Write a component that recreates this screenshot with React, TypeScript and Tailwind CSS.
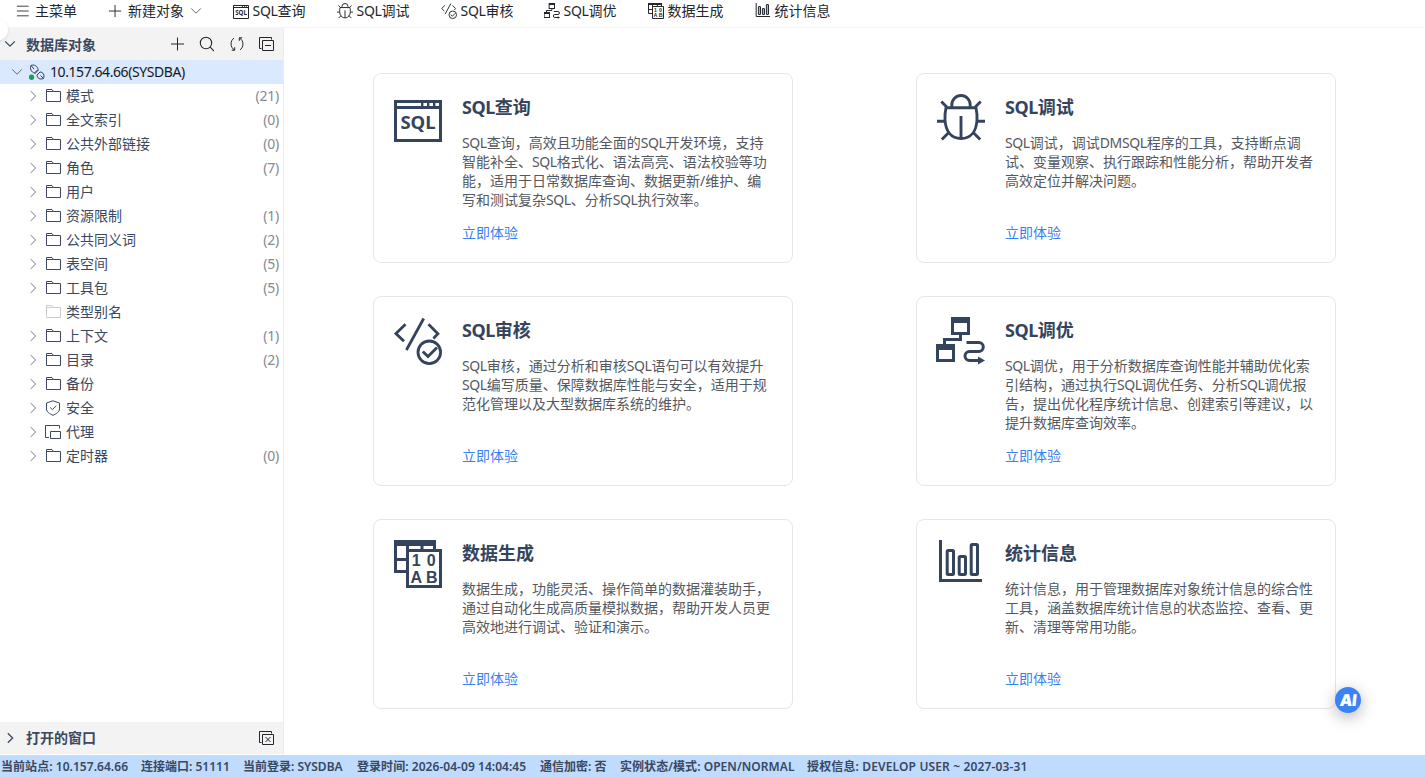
import type { ReactNode } from "react";

type IconProps = { className?: string };

function SqlIcon({ className = "size-12" }: IconProps) {
  return (
    <svg viewBox="0 0 48 48" className={className} fill="none" stroke="currentColor" strokeWidth="3">
      <path d="M1.5 7.5h45v39h-45zM1.5 13.5h45" />
      <path d="M28.2 8v5M34.2 8v5M40.2 8v5" strokeWidth="2.4" />
      <text x="6.5" y="35" textLength="35" fontSize="18.5" fontWeight="700" fill="currentColor" stroke="none">
        SQL
      </text>
    </svg>
  );
}

function BugIcon({ className = "size-12" }: IconProps) {
  return (
    <svg viewBox="0 0 48 48" className={className} fill="none" stroke="currentColor" strokeWidth="2.9">
      <path d="M14.8 13.5V11a9.2 9.5 0 0 1 18.4 0v2.5" />
      <path d="M9 13.7h30c.8 3.5 1.2 8 1 12.5C39.3 37 34 44.5 24 44.5S8.7 37 8 26.2c-.2-4.5.2-9 1-12.5z" />
      <path d="M24 22v22" />
      <path d="M4.3 7.5l5.5 5.5M43.7 7.5L38.2 13M0 27.3h7.5M40.5 27.3H48M4.8 45.5l7.5-7.5M43.2 45.5l-7.5-7.5" />
    </svg>
  );
}

function AuditIcon({ className = "size-12" }: IconProps) {
  return (
    <svg viewBox="0 0 48 48" className={className} fill="none" stroke="currentColor" strokeWidth="2.8">
      <path d="M11.5 7.2L2 16.6l8 7.6M29.7 1.5L12.4 33M34.5 7.2l9.4 9.6-4.5 4.6" />
      <circle cx="35.3" cy="35.3" r="11.3" />
      <path d="M28.8 34.6l5.2 5 9-9.2" />
    </svg>
  );
}

function TuneIcon({ className = "size-12" }: IconProps) {
  return (
    <svg viewBox="0 0 48 48" className={className} fill="none" stroke="currentColor" strokeWidth="3">
      <path d="M14 0h19v18H14zM17 6v9h13V6z" fill="currentColor" fillRule="evenodd" stroke="none" />
      <path d="M-1 27h19v18H-1zM2 33v9h13v-9z" fill="currentColor" fillRule="evenodd" stroke="none" />
      <path d="M23.5 18v4.5h-16V27" />
      <path d="M29.5 25.5h12.3a4.5 4.5 0 0 1 0 9H32.5a4.5 4.5 0 0 0 0 9H42" />
      <path d="M41 39.5l7 4-7 4z" fill="currentColor" stroke="none" />
    </svg>
  );
}

function GenerateIcon({ className = "size-12" }: IconProps) {
  return (
    <svg viewBox="0 0 48 48" className={className} fill="none" stroke="currentColor" strokeWidth="3">
      <path d="M0 0h42v6H0z" fill="currentColor" stroke="none" />
      <path d="M1.5 3v28.5H12M1.5 19.5H12M13.5 6v5M28 6v4M40.5 6v4" />
      <path d="M13.5 10.5h33v36h-33z" />
      <g
        fill="currentColor"
        stroke="none"
        fontSize="16"
        fontWeight="700"
        textAnchor="middle"
        fontFamily="Liberation Sans, sans-serif"
      >
        <text x="22.3" y="26.3">1</text>
        <text x="37.3" y="26.3">0</text>
        <text x="22.3" y="43">A</text>
        <text x="37.7" y="43">B</text>
      </g>
    </svg>
  );
}

function StatsIcon({ className = "size-12", fill = "none" }: IconProps & { fill?: string }) {
  return (
    <svg viewBox="0 0 48 48" className={className} fill="none" stroke="currentColor" strokeWidth="3">
      <path d="M3.5 0v40.5H45" />
      <g fill={fill}>
        <rect x="10.2" y="10.5" width="6.3" height="24" rx="1" />
        <rect x="22.2" y="16.5" width="6.3" height="18" rx="1" />
        <rect x="34.2" y="4.5" width="6.3" height="30" rx="1" />
      </g>
    </svg>
  );
}

function Line({ d, className }: { d: string; className: string }) {
  return (
    <svg viewBox="0 0 16 16" className={className} fill="none" stroke="currentColor">
      <path d={d} />
    </svg>
  );
}

const CHEVRON_DOWN = "M2.5 5l5.5 5.5L13.5 5";
const CHEVRON_RIGHT = "M5.5 2.5L11 8l-5.5 5.5";
const PLUS = "M7.5 1v13M1 7.5h13";
const FOLDER = "M1.5 13.5v-12H7l1.5 2h7v10zM1.5 3.5h7";
const SHIELD = "M8 .8L14.5 3v6c0 3-3.500 5-6.500 6.300C5 14 1.500 12 1.500 9V3zM5.200 7.500l2.200 2.200 3.800-4";
const AGENT = "M4 13.5H.5v-12h14v3M5.5 7.5h10v7h-10z";

// Latin runs are set slightly tighter than the Chinese text around them
function Mixed({ text, tight }: { text: string; tight: string }) {
  return (
    <>
      {text.split(/([A-Z]+)/).map((part, i) =>
        /^[A-Z]+$/.test(part) ? <span key={i} className={tight}>{part}</span> : part
      )}
    </>
  );
}

const tools: { label: string; width: string; icon: ReactNode }[] = [
  { label: "SQL查询", width: "w-[104px]", icon: <SqlIcon className="size-4" /> },
  { label: "SQL调试", width: "w-[104px]", icon: <BugIcon className="size-4" /> },
  { label: "SQL审核", width: "w-[103px]", icon: <AuditIcon className="size-4" /> },
  { label: "SQL调优", width: "w-[104px]", icon: <TuneIcon className="size-4" /> },
  { label: "数据生成", width: "w-[107px]", icon: <GenerateIcon className="size-4" /> },
  { label: "统计信息", width: "w-[80px]", icon: <StatsIcon className="size-4" fill="#8ebcf0" /> },
];

const nodes: { name: string; count?: number; icon?: string; empty?: boolean }[] = [
  { name: "模式", count: 21 },
  { name: "全文索引", count: 0 },
  { name: "公共外部链接", count: 0 },
  { name: "角色", count: 7 },
  { name: "用户" },
  { name: "资源限制", count: 1 },
  { name: "公共同义词", count: 2 },
  { name: "表空间", count: 5 },
  { name: "工具包", count: 5 },
  { name: "类型别名", empty: true },
  { name: "上下文", count: 1 },
  { name: "目录", count: 2 },
  { name: "备份" },
  { name: "安全", icon: SHIELD },
  { name: "代理", icon: AGENT },
  { name: "定时器", count: 0 },
];

const cards: { title: string; icon: ReactNode; lines: string[] }[] = [
  {
    title: "SQL查询",
    icon: <SqlIcon />,
    lines: [
      "SQL查询，高效且功能全面的SQL开发环境，支持",
      "智能补全、SQL格式化、语法高亮、语法校验等功",
      "能，适用于日常数据库查询、数据更新/维护、编",
      "写和测试复杂SQL、分析SQL执行效率。",
    ],
  },
  {
    title: "SQL调试",
    icon: <BugIcon />,
    lines: [
      "SQL调试，调试DMSQL程序的工具，支持断点调",
      "试、变量观察、执行跟踪和性能分析，帮助开发者",
      "高效定位并解决问题。",
    ],
  },
  {
    title: "SQL审核",
    icon: <AuditIcon />,
    lines: [
      "SQL审核，通过分析和审核SQL语句可以有效提升",
      "SQL编写质量、保障数据库性能与安全，适用于规",
      "范化管理以及大型数据库系统的维护。",
    ],
  },
  {
    title: "SQL调优",
    icon: <TuneIcon className="size-12 overflow-visible" />,
    lines: [
      "SQL调优，用于分析数据库查询性能并辅助优化索",
      "引结构，通过执行SQL调优任务、分析SQL调优报",
      "告，提出优化程序统计信息、创建索引等建议，以",
      "提升数据库查询效率。",
    ],
  },
  {
    title: "数据生成",
    icon: <GenerateIcon />,
    lines: [
      "数据生成，功能灵活、操作简单的数据灌装助手，",
      "通过自动化生成高质量模拟数据，帮助开发人员更",
      "高效地进行调试、验证和演示。",
    ],
  },
  {
    title: "统计信息",
    icon: <StatsIcon />,
    lines: [
      "统计信息，用于管理数据库对象统计信息的综合性",
      "工具，涵盖数据库统计信息的状态监控、查看、更",
      "新、清理等常用功能。",
    ],
  },
];

const status = [
  { text: "当前站点: 10.157.64.66", width: "w-[140px] tracking-[0.05px]" },
  { text: "连接端口: 51111", width: "w-[102px]" },
  { text: "当前登录: SYSDBA", width: "w-[114px]" },
  { text: "登录时间: 2026-04-09 14:04:45", width: "w-[183px] tracking-[0.05px]" },
  { text: "通信加密: 否", width: "w-[80px]" },
  { text: "实例状态/模式: OPEN/NORMAL", width: "w-[187px] tracking-[0.05px]" },
  { text: "授权信息: DEVELOP USER ~ 2027-03-31", width: "w-[240px] tracking-[0.14px]" },
];

function Toolbar() {
  return (
    <header className="flex h-7 shrink-0 items-center border-b border-[#f3f3f3] pb-[5px] pl-4 text-sm text-[#24262b]">
      <div className="flex w-[92px] items-center gap-[5px]">
        <Line d="M1 2.5h13.5M1 8h13.5M1 13.5h13.5" className="size-3.5" />
        主菜单
      </div>
      <div className="flex w-[125px] items-center">
        <Line d={PLUS} className="mr-[5px] size-[15px]" />
        新建对象
        <Line d={CHEVRON_DOWN} className="ml-[5px] size-3.5 text-[#555]" />
      </div>
      {tools.map(t => (
        <div key={t.label} className={"flex items-center gap-[3.5px] whitespace-nowrap " + t.width}>
          {t.icon}
          <span><Mixed text={t.label} tight="tracking-[-0.3px]" /></span>
        </div>
      ))}
    </header>
  );
}

function Sidebar() {
  return (
    <aside className="flex w-[284px] shrink-0 flex-col border-r border-[#ececec] text-sm text-[#3a4860]">
      <div className="flex h-8 items-center bg-[#f3f3f3] pl-[3px]">
        <Line d={CHEVRON_DOWN} className="size-3.5 stroke-[1.5]" />
        <span className="ml-[9px] flex-1 pt-px font-bold">数据库对象</span>
        <div className="flex items-center gap-3.5 pr-[9px] text-[#24262b]">
          <Line d="M9.5 1.500v13M3 8h13" className="size-4" />
          <svg viewBox="0 0 16 16" className="size-4" fill="none" stroke="currentColor" strokeWidth="1.1">
            <circle cx="8" cy="7" r="5.7" />
            <path d="M12.2 11.2L16 15" />
          </svg>
          <Line
            d="M6.5 14C2 11.500 2 4.500 6 2.200M3.700 14.200h3v-3M11.500 2c4.500 2.500 4.500 9.500.5 11.800M14.300 1.800h-3v3"
            className="size-4"
          />
          <Line d="M3.5 12.5h-2v-11h12v2M4.5 4.5h11v10h-11zM7 9.5h6" className="size-4" />
        </div>
      </div>
      <div className="flex h-6 items-center bg-[#dbe9ff] pl-2.5 text-[#15171c]">
        <Line d={CHEVRON_DOWN} className="size-3.5 text-[#555]" />
        <svg viewBox="0 0 16 16" className="ml-[5px] size-4" fill="none" stroke="#33425c">
          <path d="M2 1.5c2.8-1.5 7 .8 7 4L5.5 9C2.300 8.500.5 4.300 2 1.500zM2 1.500L5 5M9.500 6l-4 4M14.500 14.500c1.500-3.500-.5-6.500-3.500-6.500L8 11c0 3 3 5 6.500 3.500zM11.500 11.500l3 3" />
          <circle cx="2.5" cy="13.2" r="2.7" fill="#16a34a" stroke="none" />
        </svg>
        <span className="ml-[5px] tracking-[-0.43px]">10.157.64.66(SYSDBA)</span>
      </div>
      <ul className="flex-1">
        {nodes.map(n => (
          <li key={n.name} className="flex h-6 items-center pr-1 pl-[26px]">
            <Line d={CHEVRON_RIGHT} className={n.empty ? "invisible size-3.5" : "size-3.5 text-[#5e6470]"} />
            <Line d={n.icon ?? FOLDER} className={n.empty ? "ml-[5px] size-4 text-[#c9ccd3]" : "ml-[5px] size-4"} />
            <span className="ml-[5px] flex-1">{n.name}</span>
            {n.count !== undefined && <span className="tracking-[-0.25px] text-[#868a92]">({n.count})</span>}
          </li>
        ))}
      </ul>
      <div className="mb-px flex h-8 items-center bg-[#f3f3f3] pr-[9px] pl-[3px]">
        <Line d={CHEVRON_RIGHT} className="size-3.5 stroke-[1.5]" />
        <span className="ml-[9px] flex-1 font-bold">打开的窗口</span>
        <Line d="M3.5 12.5h-2v-11h12v2M4.5 4.5h11v10h-11zM7.5 7l5 5M12.5 7l-5 5" className="size-4 text-[#24262b]" />
      </div>
    </aside>
  );
}

export default function App() {
  return (
    <div
      lang="zh-CN"
      className="relative flex h-[777px] w-[1425px] flex-col overflow-hidden bg-white font-['Noto_Sans','Noto_Sans_CJK_SC',sans-serif]"
    >
      <Toolbar />
      <div className="flex min-h-0 flex-1">
        <Sidebar />
        <main className="grid flex-1 grid-cols-[420px_420px] content-start gap-x-[123px] gap-y-[33px] pt-[45px] pl-[89px]">
          {cards.map(c => (
            <section key={c.title} className="flex h-[190px] gap-5 rounded-lg border border-[#e6e6e6] p-5 text-[#35445d]">
              <div className="shrink-0">{c.icon}</div>
              <div className="whitespace-nowrap">
                <h3 className="h-[26px] text-lg leading-[26px] font-bold">
                  <Mixed text={c.title} tight="tracking-[-0.5px]" />
                </h3>
                <div className="mt-[13px] h-[76px] text-sm leading-[19px] text-[#55585e]">
                  {c.lines.map(l => (
                    <p key={l}><Mixed text={l} tight="tracking-[-0.4px]" /></p>
                  ))}
                </div>
                <a className="mt-3.5 block text-sm leading-5 text-[#3b7ff5]">立即体验</a>
              </div>
            </section>
          ))}
        </main>
      </div>
      <footer className="flex h-[22px] shrink-0 items-center bg-[#bfdbfe] pt-0.5 pl-px text-xs font-semibold whitespace-nowrap text-[#3a4860]">
        {status.map(s => (
          <span key={s.text} className={s.width}>{s.text}</span>
        ))}
      </footer>

      {/* collapse handle cut off by the window edge */}
      <div className="absolute top-[19px] -left-3.5 size-[22px] rounded-full bg-white shadow-sm" />
      <div className="absolute top-[687px] left-[1335px] flex size-[26px] items-center justify-center rounded-full bg-[#3b82f6] font-['Inter','Liberation_Sans',sans-serif] text-base font-black text-white shadow-[0_4px_16px_rgba(0,0,0,0.3)]">
        <span className="-skew-x-6 tracking-[-0.5px]">AI</span>
      </div>
    </div>
  );
}
